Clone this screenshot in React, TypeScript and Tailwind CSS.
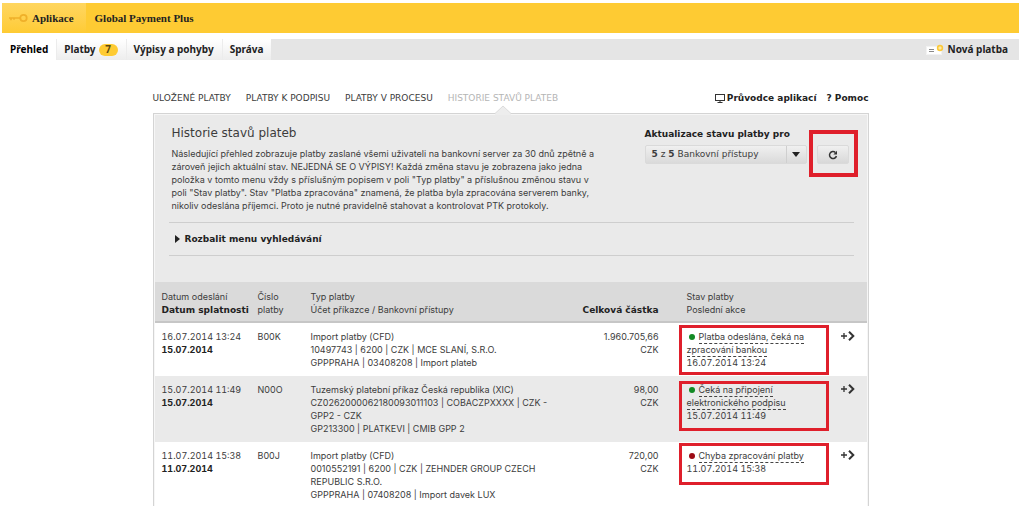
import type { ReactNode } from "react";

type Payment = {
  sent: string;
  due: string;
  id: string;
  type: string[];
  amount: string;
  status: string;
  dot: string;
  frame: string;
  changed: string;
};

const payments: Payment[] = [
  {
    sent: "16.07.2014 13:24",
    due: "15.07.2014",
    id: "B00K",
    type: [
      "Import platby (CFD)",
      "10497743 | 6200 | CZK | MCE SLANÍ, S.R.O.",
      "GPPPRAHA | 03408208 | Import plateb"
    ],
    amount: "1.960.705,66",
    status: "Platba odeslána, čeká na zpracování bankou",
    dot: "bg-[#128a24]",
    frame: "top-[2px] h-[50px]",
    changed: "16.07.2014 13:24"
  },
  {
    sent: "15.07.2014 11:49",
    due: "15.07.2014",
    id: "N00O",
    type: [
      "Tuzemský platební příkaz Česká republika (XIC)",
      "CZ0262000062180093011103 | COBACZPXXXX | CZK - GPP2 - CZK",
      "GP213300 | PLATKEVI | CMIB GPP 2"
    ],
    amount: "98,00",
    status: "Čeká na připojení elektronického podpisu",
    dot: "bg-[#128a24]",
    frame: "top-[5px] h-[50px]",
    changed: "15.07.2014 11:49"
  },
  {
    sent: "11.07.2014 15:38",
    due: "11.07.2014",
    id: "B00J",
    type: [
      "Import platby (CFD)",
      "0010552191 | 6200 | CZK | ZEHNDER GROUP CZECH REPUBLIC S.R.O.",
      "GPPPRAHA | 07408208 | Import davek LUX"
    ],
    amount: "720,00",
    status: "Chyba zpracování platby",
    dot: "bg-[#9c0a14]",
    frame: "top-[1px] h-[42px]",
    changed: "11.07.2014 15:38"
  }
];

const KeyIcon = () => (
  <svg width="20" height="10" viewBox="0 0 20 10" fill="none" stroke="#efb02a">
    <circle cx="15.5" cy="5" r="3.2" strokeWidth="1.8" />
    <path d="M1 5h11.5M3 5v2.2M6 5v1.8" strokeWidth="1.6" />
  </svg>
);

const NewPaymentIcon = () => (
  <svg width="18" height="12" viewBox="0 0 18 12" fill="none">
    <rect x="0.5" y="2.5" width="15" height="8" fill="#fff" stroke="#f2f2f2" />
    <path d="M3 5.5h5M3 7.5h5" stroke="#8a8a8a" />
    <circle cx="14" cy="4" r="3.2" fill="#fbc93a" />
    <path d="M14 2.3v3.4M12.3 4h3.4" stroke="#fff3c8" />
  </svg>
);

const MonitorIcon = () => (
  <svg width="10" height="9" viewBox="0 0 10 9" fill="none" stroke="#333">
    <rect x="0.5" y="0.5" width="9" height="6" />
    <path d="M2.5 8.5h5M5 6.5v2" />
  </svg>
);

const RefreshIcon = () => (
  <svg width="10" height="10" viewBox="0 0 10 10" fill="none">
    <path d="M7.4 2.5A3.5 3.5 0 1 0 8.4 6" stroke="#333" strokeWidth="1.5" />
    <path d="M9 0.8v3.6H5.4z" fill="#333" />
  </svg>
);

const DetailIcon = () => (
  <svg width="14" height="10" viewBox="0 0 14 10" fill="none" stroke="#333">
    <path d="M0 5h6M3 2v6" strokeWidth="1.3" />
    <path d="M8 0.8L12.3 5L8 9.2" strokeWidth="2" />
  </svg>
);

const NavTab = ({ children }: { children: ReactNode }) => (
  <a
    href="#"
    className="flex items-center bg-linear-to-b from-white to-[#ededed] px-2 shadow-[inset_1px_0_0_#ececec]"
  >
    {children}
  </a>
);

const Header = () => (
  <header className="pt-[3px] text-[#222]">
    <div className="flex h-[30px] bg-[#fecb33] font-['Liberation_Serif',serif] text-[11px] font-bold">
      <a
        href="#"
        className="flex items-center gap-1 bg-linear-to-b from-[#ffd65f] to-[#fecb33] pl-[6px] pr-3"
      >
        <KeyIcon />
        Aplikace
      </a>
      <span className="flex items-center pl-[9px]">Global Payment Plus</span>
    </div>
    <nav className="mt-[6px] flex h-[21px] bg-[#e5e5e5] font-['Noto_Sans',sans-serif] text-[10px] font-bold">
      <a href="#" className="flex items-center bg-white px-2 text-black">
        Přehled
      </a>
      <NavTab>
        Platby
        <span className="ml-[3px] flex h-3 w-[19px] items-center justify-center rounded-full bg-[#fecb33] text-[#5c4a12]">
          7
        </span>
      </NavTab>
      <NavTab>Výpisy a pohyby</NavTab>
      <NavTab>Správa</NavTab>
      <a href="#" className="ml-auto flex items-center gap-1 pr-[11px]">
        <NewPaymentIcon />
        Nová platba
      </a>
    </nav>
  </header>
);

const SubNav = () => (
  <div className="flex h-[13px] items-center justify-between font-['DejaVu_Sans',sans-serif]">
    <nav className="flex gap-[15px]">
      <a href="#">ULOŽENÉ PLATBY</a>
      <a href="#">PLATBY K PODPISU</a>
      <a href="#">PLATBY V PROCESU</a>
      <a href="#" className="relative text-[#b5b5b5]">
        HISTORIE STAVŮ PLATEB
        <svg
          className="absolute left-1/2 top-[13px] -ml-2"
          width="16"
          height="10"
          viewBox="0 0 16 10"
        >
          <path d="M0 8.5L8 1l8 7.5V10H0z" fill="#ededed" />
          <path d="M0 8.5L8 1l8 7.5" fill="none" stroke="#dcdcdc" />
        </svg>
      </a>
    </nav>
    <div className="flex gap-[10px] font-bold text-[#222]">
      <a href="#" className="flex items-center gap-[2px]">
        <MonitorIcon />
        Průvodce aplikací
      </a>
      <a href="#">? Pomoc</a>
    </div>
  </div>
);

const Intro = () => (
  <section className="bg-[#eaeaea] pb-[26px] pl-[14px] pr-[13px] pt-[10px]">
    <div className="flex justify-between pl-[3px]">
      <div className="max-w-[428px]">
        <h1 className="font-['DejaVu_Sans',sans-serif] text-[12px] leading-4">
          Historie stavů plateb
        </h1>
        <p className="mt-[6px]">
          Následující přehled zobrazuje platby zaslané všemi uživateli na
          bankovní server za 30 dnů zpětně a zároveň jejich aktuální stav.
          NEJEDNÁ SE O VÝPISY! Každá změna stavu je zobrazena jako jedna položka
          v tomto menu vždy s příslušným popisem v poli "Typ platby" a
          příslušnou změnou stavu v poli "Stav platby". Stav "Platba zpracována"
          znamená, že platba byla zpracována serverem banky, nikoliv odeslána
          příjemci. Proto je nutné pravidelně stahovat a kontrolovat PTK
          protokoly.
        </p>
      </div>
      <div className="flex w-[209px] shrink-0 pt-[3px]">
        <div className="w-[162px]">
          <label
            htmlFor="access"
            className="block font-['DejaVu_Sans',sans-serif] font-bold text-[#222]"
          >
            Aktualizace stavu platby pro
          </label>
          <div className="relative mt-1 flex h-[19px] items-center rounded-xs border border-[#dadada] bg-linear-to-b from-[#f0f0f0] to-[#dadada] pl-[6px] font-['DejaVu_Sans',sans-serif]">
            <span className="whitespace-nowrap">
              <b>5</b> z <b>5</b>
            </span>
            <select
              id="access"
              className="h-full min-w-0 flex-1 appearance-none bg-transparent pl-[3px]"
            >
              <option>Bankovní přístupy</option>
            </select>
            <span className="pointer-events-none flex h-full w-5 items-center justify-center border-l border-[#cfcfcf]">
              <svg width="8" height="5" viewBox="0 0 8 5">
                <path d="M0 0h8L4 5z" fill="#222" />
              </svg>
            </span>
          </div>
        </div>
        <div className="relative ml-[10px] pt-[17px]">
          <button
            type="button"
            aria-label="Aktualizovat"
            className="flex h-[19px] w-8 items-center justify-center rounded-xs border border-[#dadada] bg-linear-to-b from-[#f0f0f0] to-[#d8d8d8]"
          >
            <RefreshIcon />
          </button>
          <span className="pointer-events-none absolute -left-2 top-[2px] h-[47px] w-[49px] border-4 border-[#df1f2b]" />
        </div>
      </div>
    </div>
    <div className="mt-[10px] flex h-[34px] items-center border-y border-[#cecece] pl-[6px]">
      <button
        type="button"
        className="flex items-center gap-[5px] font-['DejaVu_Sans',sans-serif] font-bold text-[#222]"
      >
        <svg width="5" height="8" viewBox="0 0 5 8">
          <path d="M0 0v8l5-4z" fill="#222" />
        </svg>
        Rozbalit menu vyhledávání
      </button>
    </div>
  </section>
);

const PaymentRow = ({ payment }: { payment: Payment }) => (
  <tr className="align-top even:bg-[#eaeaea]">
    <td className="py-[7px] pl-[7px] tabular-nums">
      {payment.sent}
      <br />
      <b className="text-[#222]">{payment.due}</b>
    </td>
    <td className="py-[7px] pl-[7px]">{payment.id}</td>
    <td className="py-[7px] pl-[7px]">
      {payment.type.map(line => (
        <div key={line}>{line}</div>
      ))}
    </td>
    <td className="py-[7px] text-right">
      {payment.amount}
      <br />
      CZK
    </td>
    <td className="relative py-[7px] pl-7 pr-5 tabular-nums">
      <span
        className={`ml-[2px] mr-1 inline-block h-[6px] w-[6px] rounded-full ${payment.dot}`}
      />
      <span className="border-b border-dashed border-[#444] pb-px">
        {payment.status}
      </span>
      <br />
      {payment.changed}
      <span
        className={`pointer-events-none absolute left-5 right-0 border-[3px] border-[#df1f2b] ${payment.frame}`}
      />
    </td>
    <td className="pl-3 pt-2">
      <a href="#" aria-label="Detail platby">
        <DetailIcon />
      </a>
    </td>
  </tr>
);

const PaymentTable = () => (
  <table className="w-full table-fixed border-collapse bg-white">
    <colgroup>
      <col className="w-[96px]" />
      <col className="w-[53px]" />
      <col />
      <col className="w-[96px]" />
      <col className="w-[170px]" />
      <col className="w-[38px]" />
    </colgroup>
    <thead>
      <tr className="border-b-2 border-[#c6c6c6] bg-[#dadada] text-left align-top">
        <th className="pb-1 pl-[7px] pt-2 font-normal">
          Datum odeslání
          <br />
          <b className="font-['DejaVu_Sans',sans-serif] text-[#222]">
            Datum splatnosti
          </b>
        </th>
        <th className="pb-1 pl-[7px] pt-2 font-normal">Číslo platby</th>
        <th className="pb-1 pl-[7px] pt-2 font-normal">
          Typ platby
          <br />
          Účet příkazce / Bankovní přístupy
        </th>
        <th className="pb-1 text-right align-bottom font-['DejaVu_Sans',sans-serif] text-[#222]">
          Celková částka
        </th>
        <th className="pb-1 pl-7 pt-2 font-normal">
          Stav platby
          <br />
          Poslední akce
        </th>
        <th />
      </tr>
    </thead>
    <tbody>
      {payments.map(payment => (
        <PaymentRow key={payment.id} payment={payment} />
      ))}
    </tbody>
  </table>
);

const App = () => (
  <div className="h-screen overflow-hidden bg-white pl-[2px] pr-1 font-['Inter',sans-serif] text-[9px] leading-[13px] text-[#3c3c3c]">
    <Header />
    <main className="mx-auto max-w-[716px] pt-8">
      <SubNav />
      <div className="mt-2 border border-[#d4d4d4] bg-[#f6f6f6] p-px">
        <Intro />
        <PaymentTable />
      </div>
    </main>
  </div>
);

export default App;
